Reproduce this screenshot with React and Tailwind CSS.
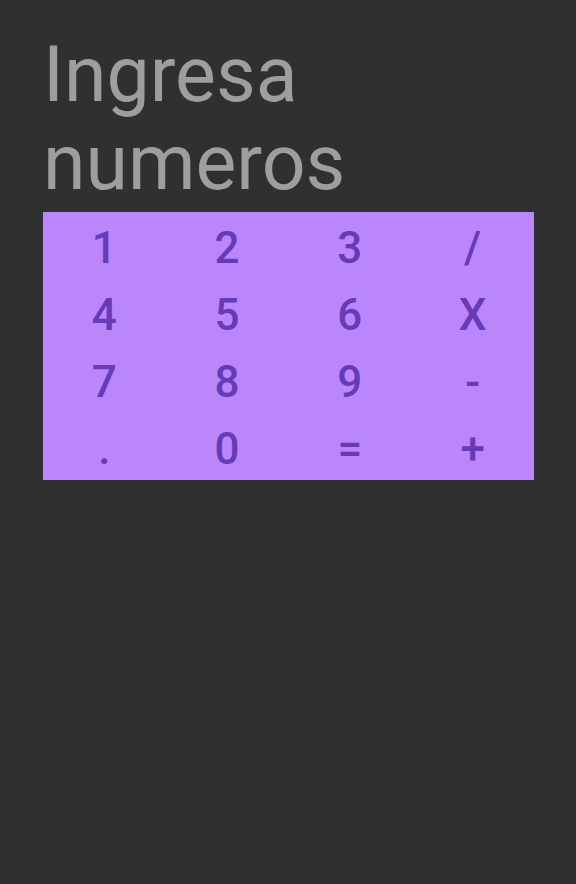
const keys = ['1', '2', '3', '/', '4', '5', '6', 'X', '7', '8', '9', '-', '.', '0', '=', '+'];

export default function App() {
  return (
    <div className="min-h-screen w-full bg-[#303030] px-[43px] pt-[31px] font-['Roboto',sans-serif]">
      <h1 className="text-[77px] leading-[88px] font-normal text-[#9e9e9e]">
        Ingresa
        <br />
        numeros
      </h1>
      <div className="mt-[5px] grid grid-cols-4 grid-rows-4 h-[268px] w-[491px] bg-[#bb86fc]">
        {keys.map((k) => (
          <button
            key={k}
            className="flex items-center justify-center pt-[4px] text-[44px] font-medium text-[#673ab7]"
          >
            {k}
          </button>
        ))}
      </div>
    </div>
  );
}
